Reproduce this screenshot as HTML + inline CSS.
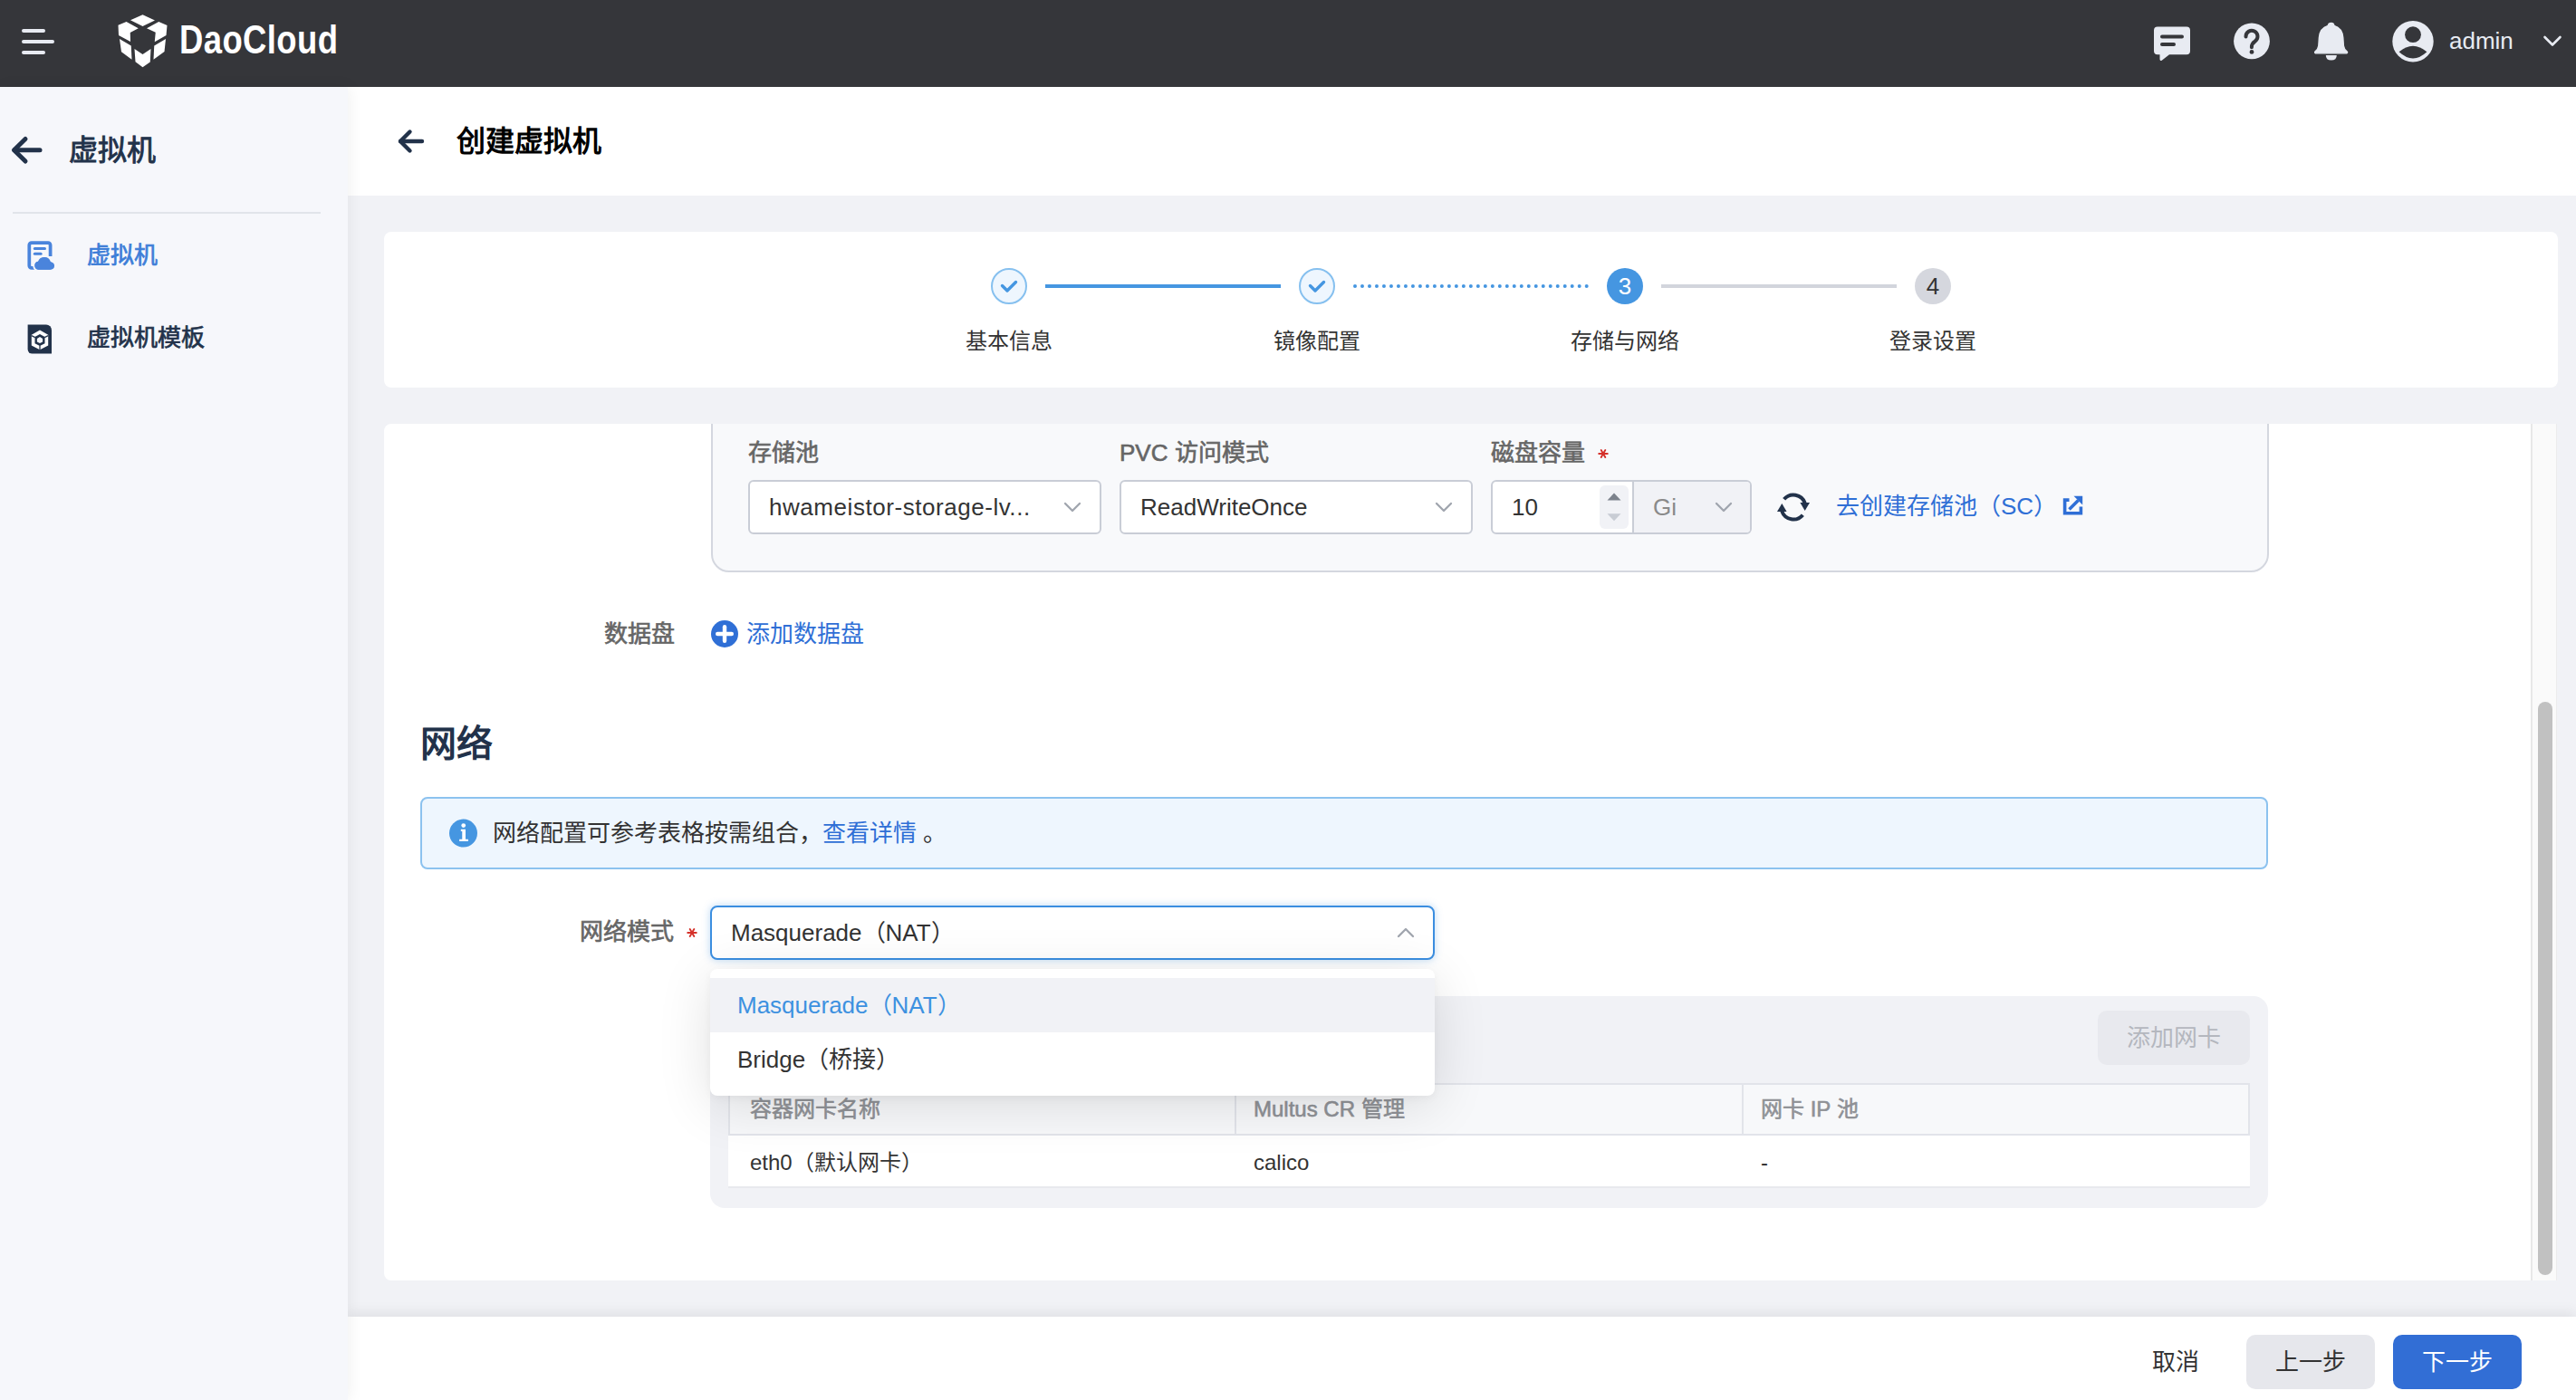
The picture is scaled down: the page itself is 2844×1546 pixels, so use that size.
<!DOCTYPE html>
<html lang="zh-CN">
<head>
<meta charset="utf-8">
<style>
*{box-sizing:border-box;margin:0;padding:0}
html,body{width:2844px;height:1546px;overflow:hidden}
body{position:relative;background:#f1f2f6;font-family:"Liberation Sans",sans-serif;color:#333;}
.a{position:absolute;white-space:nowrap}
#hdr{position:absolute;left:0;top:0;width:2844px;height:96px;background:#35363a}
#side{position:absolute;left:0;top:96px;width:384px;height:1450px;background:#f6f7fb;box-shadow:2px 0 16px rgba(0,0,0,0.06);z-index:5}
#chead{position:absolute;left:384px;top:96px;width:2460px;height:120px;background:#fff}
#steps{position:absolute;left:424px;top:256px;width:2400px;height:172px;background:#fff;border-radius:8px}
#form{position:absolute;left:424px;top:468px;width:2400px;height:946px;background:#fff;border-radius:8px 0 0 8px;overflow:hidden}
#foot{position:absolute;left:384px;top:1454px;width:2460px;height:92px;background:#fff;box-shadow:0 -4px 14px rgba(0,0,0,0.08);z-index:4}
.stl{font-size:24px;line-height:36px;text-align:center;color:#333}
.lbl{font-size:26px;font-weight:400;-webkit-text-stroke:0.65px #666;color:#666;line-height:40px}
.req{font-size:26px;color:#d93a3a;line-height:30px}
.inp{height:60px;border:2px solid #c9cdd6;border-radius:6px;background:#fff}
.itx{position:absolute;left:21px;top:0;line-height:56px;font-size:26px;color:#333;white-space:nowrap}
.lnk{font-size:26px;color:#2f6fd6}
.th{font-size:24px;font-weight:400;-webkit-text-stroke:0.6px #8f9196;color:#8f9196;line-height:40px}
.td{font-size:24px;color:#333;line-height:40px}
</style>
</head>
<body>
<!-- HEADER -->
<div id="hdr">
  <svg class="a" style="left:20px;top:28px" width="46" height="36" viewBox="0 0 46 36">
    <g stroke="#e8ebf2" stroke-width="4" stroke-linecap="round">
      <line x1="6" y1="6" x2="28" y2="6"/><line x1="6" y1="18" x2="38" y2="18"/><line x1="6" y1="30" x2="28" y2="30"/>
    </g>
  </svg>
  <svg class="a" style="left:125px;top:10px" width="70" height="70" viewBox="0 0 1400 1400">
    <g fill="#fff">
      <polygon points="650,125 920,250 650,380 380,245"/>
      <polygon points="110,355 290,280 555,425 375,520 380,720 120,580"/>
      <polygon points="1005,280 1190,360 1170,580 915,725 935,515 740,425"/>
      <polygon points="140,660 395,810 410,1115 180,945"/>
      <polygon points="1160,660 1130,940 890,1115 905,810"/>
      <polygon points="470,880 650,1000 830,880 815,1170 650,1285 490,1165"/>
    </g>
  </svg>
  <div class="a" style="left:198px;top:18px;font-size:45px;font-weight:bold;color:#fff;transform:scaleX(0.81);transform-origin:0 0;letter-spacing:0.5px">DaoCloud</div>
  <svg class="a" style="left:2370px;top:22px" width="56" height="50" viewBox="0 0 56 50">
    <path d="M12,7.6 H44 a4,4 0 0 1 4,4 V34.2 a4,4 0 0 1 -4,4 H25 L17,44.5 Q15,46 14.5,43.5 V38.2 H12 a4,4 0 0 1 -4,-4 V11.6 a4,4 0 0 1 4,-4 Z" fill="#e8ebf2"/>
    <g stroke="#35363a" stroke-width="4" stroke-linecap="round"><line x1="17" y1="18.4" x2="39" y2="18.4"/><line x1="17" y1="27" x2="30" y2="27"/></g>
  </svg>
  <svg class="a" style="left:2460px;top:20px" width="52" height="52" viewBox="0 0 52 52">
    <circle cx="26" cy="25.4" r="19.9" fill="#e8ebf2"/>
    <path d="M19.5,20.5 a6.5,6.5 0 1 1 10,5.2 q-3.6,2.3 -3.6,6.5" fill="none" stroke="#35363a" stroke-width="4" stroke-linecap="round"/>
    <circle cx="26" cy="37.4" r="2.4" fill="#35363a"/>
  </svg>
  <svg class="a" style="left:2550px;top:20px" width="48" height="52" viewBox="0 0 48 52">
    <path transform="translate(0,0.3) scale(1,0.945)" d="M23.8,5.5 q2.6,0 3.2,3 q9,2.8 9.8,14 l0.6,9.5 q0.5,4 3.6,6.5 q1.2,1.3 0,2.3 H6.2 q-1.2,-1 0,-2.3 q3.1,-2.5 3.6,-6.5 l0.6,-9.5 q0.8,-11.2 9.8,-14 q0.6,-3 3.6,-3 Z" fill="#e8ebf2" stroke="#e8ebf2" stroke-width="1.4" stroke-linejoin="round"/>
    <path d="M17.8,41 h12 q0,5.5 -6,5.5 q-6,0 -6,-5.5 Z" fill="#e8ebf2"/>
  </svg>
  <svg class="a" style="left:2636px;top:18px" width="56" height="56" viewBox="0 0 56 56">
    <circle cx="28" cy="27.8" r="22.7" fill="#e8ebf2"/>
    <circle cx="28" cy="20.2" r="8.9" fill="#35363a"/>
    <path d="M12.6,39.2 Q28,26.2 43.4,39.2 Q28,53.6 12.6,39.2 Z" fill="#35363a"/>
  </svg>
  <div class="a" style="left:2704px;top:30px;font-size:26px;color:#e8ebf2;line-height:30px">admin</div>
  <svg class="a" style="left:2806px;top:36px" width="24" height="18" viewBox="0 0 24 18">
    <polyline points="3.5,5 12,13.5 20.5,5" fill="none" stroke="#e8ebf2" stroke-width="2.6" stroke-linecap="round" stroke-linejoin="round"/>
  </svg>
</div>


<!-- SIDEBAR -->
<div id="side">
  <svg class="a" style="left:8px;top:50px" width="44" height="40" viewBox="0 0 44 40">
    <g fill="none" stroke="#22324a" stroke-width="5" stroke-linecap="round" stroke-linejoin="round">
      <line x1="8" y1="19.8" x2="36" y2="19.8"/><polyline points="20,7.5 7.5,19.8 20,32"/>
    </g>
  </svg>
  <div class="a" id="sbt" style="left:76px;top:50px;font-size:32px;font-weight:400;-webkit-text-stroke:0.9px #22324a;color:#22324a;line-height:40px">虚拟机</div>
  <div class="a" style="left:14px;top:138px;width:340px;height:2px;background:#e1e4ea"></div>
  <svg class="a" style="left:28px;top:168px" width="36" height="36" viewBox="0 0 36 36">
    <path d="M27.6,19 V6.7 a2.5,2.5 0 0 0 -2.5,-2.5 H6.8 a2.5,2.5 0 0 0 -2.5,2.5 V29.3 a2.5,2.5 0 0 0 2.5,2.5 H11" fill="none" stroke="#4a84dc" stroke-width="3.75"/>
    <g stroke="#4a84dc" stroke-width="3" stroke-linecap="round"><line x1="10.3" y1="10.6" x2="21.5" y2="10.6"/><line x1="10.3" y1="16.2" x2="17.1" y2="16.2"/></g>
    <g fill="#4a84dc" stroke="#f6f7fb" stroke-width="2.2">
      <path d="M14.5,34.8 a5.6,5.6 0 0 1 -0.6,-11.1 a8,8 0 0 1 14.9,0.6 a5.3,5.3 0 0 1 -0.6,10.5 Z"/>
    </g>
    <path d="M14.5,33.7 a4.5,4.5 0 0 1 -0.5,-8.9 a6.9,6.9 0 0 1 13.1,0.5 a4.2,4.2 0 0 1 -0.3,8.4 Z" fill="#4a84dc"/>
  </svg>
  <div class="a" id="m1" style="left:96px;top:169px;font-size:26px;font-weight:400;-webkit-text-stroke:0.7px #3d7ed8;color:#3d7ed8;line-height:34px">虚拟机</div>
  <svg class="a" style="left:28px;top:260px" width="34" height="36" viewBox="0 0 34 36">
    <path d="M2.6,2.4 H23 a6,6 0 0 1 6,6 V34.6 H7.6 a5,5 0 0 1 -5,-5 Z" fill="#22324a"/>
    <polygon points="16,8.6 25.2,13.8 25.2,25.4 16,30.2 6.8,25.4 6.8,13.8" fill="#fff"/>
    <polygon points="16,12.9 21.5,15.9 21.5,23.2 16,25.9 10.5,23.2 10.5,15.9" fill="#22324a"/>
    <polygon points="16,16.1 19.1,17.9 19.1,21.4 16,23.1 12.9,21.4 12.9,17.9" fill="#f6f7fb"/>
    <g stroke="#22324a" stroke-width="1.3"><line x1="6.8" y1="14.6" x2="10.8" y2="16.6"/><line x1="25.2" y1="14.6" x2="21.2" y2="16.6"/><line x1="16" y1="25.5" x2="16" y2="30.5"/></g>
  </svg>
  <div class="a" id="m2" style="left:96px;top:260px;font-size:26px;font-weight:400;-webkit-text-stroke:0.7px #22324a;color:#22324a;line-height:34px">虚拟机模板</div>
</div>

<!-- CONTENT HEADER -->
<div id="chead">
  <svg class="a" style="left:52px;top:44px" width="34" height="32" viewBox="0 0 34 32">
    <g fill="none" stroke="#22324a" stroke-width="4.4" stroke-linecap="round" stroke-linejoin="round">
      <line x1="6" y1="16" x2="30" y2="16"/><polyline points="16.5,5.5 6,16 16.5,26.5"/>
    </g>
  </svg>
  <div class="a" id="ctitle" style="left:120px;top:40px;font-size:32px;font-weight:700;color:#000;line-height:40px">创建虚拟机</div>
</div>

<!-- STEPS -->
<div id="steps">
  <div class="a" style="left:670px;top:40px;width:40px;height:40px;border-radius:50%;border:2px solid #86c0ef;background:#eef6fe"></div>
  <svg class="a" style="left:680px;top:52px" width="20" height="16" viewBox="0 0 20 16"><polyline points="2.5,7.5 8,13 17.5,3.5" fill="none" stroke="#4596e1" stroke-width="3.4" stroke-linecap="round" stroke-linejoin="round"/></svg>
  <div class="a" style="left:730px;top:58px;width:260px;height:4px;background:#4596e1"></div>
  <div class="a" style="left:1010px;top:40px;width:40px;height:40px;border-radius:50%;border:2px solid #86c0ef;background:#eef6fe"></div>
  <svg class="a" style="left:1020px;top:52px" width="20" height="16" viewBox="0 0 20 16"><polyline points="2.5,7.5 8,13 17.5,3.5" fill="none" stroke="#4596e1" stroke-width="3.4" stroke-linecap="round" stroke-linejoin="round"/></svg>
  <div class="a" style="left:1070px;top:58px;width:260px;height:4px;border-top:4px dotted #4596e1"></div>
  <div class="a" style="left:1350px;top:40px;width:40px;height:40px;border-radius:50%;background:#4596e1;color:#fff;font-size:26px;line-height:40px;text-align:center">3</div>
  <div class="a" style="left:1410px;top:58px;width:260px;height:4px;background:#d2d5dc"></div>
  <div class="a" style="left:1690px;top:40px;width:40px;height:40px;border-radius:50%;background:#d5d7de;color:#333;font-size:26px;line-height:40px;text-align:center">4</div>
  <div class="a stl" style="left:590px;top:103px;width:200px;">基本信息</div>
  <div class="a stl" style="left:930px;top:103px;width:200px;">镜像配置</div>
  <div class="a stl" style="left:1270px;top:103px;width:200px;">存储与网络</div>
  <div class="a stl" style="left:1610px;top:103px;width:200px;">登录设置</div>
</div>

<!-- FORM -->
<div id="form">
  <!-- storage box -->
  <div class="a" style="left:361px;top:-100px;width:1720px;height:264px;border:2px solid #d4d7df;border-radius:20px;background:#f8f9fb"></div>
  <div class="a lbl" style="left:402px;top:12px">存储池</div>
  <div class="a lbl" style="left:812px;top:12px">PVC 访问模式</div>
  <div class="a lbl" style="left:1222px;top:12px">磁盘容量</div>
  <svg class="a" style="left:1340px;top:27px" width="12" height="12" viewBox="0 0 12 12"><g stroke="#d5322b" stroke-width="1.9" stroke-linecap="round"><line x1="1.2" y1="6" x2="10.8" y2="6"/><line x1="3.7" y1="2.1" x2="8.3" y2="9.9"/><line x1="8.3" y1="2.1" x2="3.7" y2="9.9"/></g></svg>
  <div class="a inp" style="left:402px;top:62px;width:390px"><span class="itx" style="letter-spacing:0.55px">hwameistor-storage-lv...</span>
    <svg class="a" style="right:20px;top:21px" width="20" height="14" viewBox="0 0 20 14"><polyline points="2,3 10,11 18,3" fill="none" stroke="#a0a5ae" stroke-width="2.3" stroke-linecap="round" stroke-linejoin="round"/></svg></div>
  <div class="a inp" style="left:812px;top:62px;width:390px"><span class="itx">ReadWriteOnce</span>
    <svg class="a" style="right:20px;top:21px" width="20" height="14" viewBox="0 0 20 14"><polyline points="2,3 10,11 18,3" fill="none" stroke="#a0a5ae" stroke-width="2.3" stroke-linecap="round" stroke-linejoin="round"/></svg></div>
  <div class="a inp" style="left:1222px;top:62px;width:288px;overflow:hidden">
    <span class="itx">10</span>
    <div class="a" style="left:118px;top:4px;width:32px;height:48px;background:#f1f2f6;border-radius:6px"></div>
    <svg class="a" style="left:125px;top:11px" width="18" height="34" viewBox="0 0 18 34"><polygon points="1.5,9.5 16.5,9.5 9,1.5" fill="#7c828c"/><polygon points="1.5,24.3 16.5,24.3 9,32.3" fill="#c8ccd4"/></svg>
    <div class="a" style="left:154px;top:0;width:132px;height:56px;background:#f1f2f6;border-left:2px solid #c9cdd6"></div>
    <span class="a" style="left:177px;top:0;line-height:56px;font-size:26px;color:#8a8a8a">Gi</span>
    <svg class="a" style="left:244px;top:21px" width="24" height="14" viewBox="0 0 24 14"><polyline points="3,3 11,11 19,3" fill="none" stroke="#a0a5ae" stroke-width="2.3" stroke-linecap="round" stroke-linejoin="round"/></svg>
  </div>
  <svg class="a" style="left:1536px;top:75px" width="40" height="34" viewBox="0 0 40 34">
    <g fill="none" stroke="#22324a" stroke-width="4">
      <path d="M9.66,8.32 A13.5,13.5 0 0 1 32.69,12.38"/>
      <path d="M30.34,25.68 A13.5,13.5 0 0 1 7.31,21.62"/>
    </g>
    <polygon points="27.4,12 38,12 32.7,21" fill="#22324a"/>
    <polygon points="2,22 12.6,22 7.3,13" fill="#22324a"/>
  </svg>
  <span class="a lnk" style="left:1603px;top:71px;line-height:40px">去创建存储池（SC）</span>
  <svg class="a" style="left:1852px;top:78px" width="26" height="26" viewBox="0 0 26 26">
    <path d="M8.5,6.1 H3.6 V20.8 H21.4 V13.6" fill="none" stroke="#2f6fd6" stroke-width="3.6"/>
    <path d="M8.5,16.5 L18.5,6.5" stroke="#2f6fd6" stroke-width="3.6"/>
    <polygon points="13.5,1.7 23.2,1.7 23.2,11.4" fill="#2f6fd6"/>
  </svg>

  <!-- data disk -->
  <div class="a lbl" style="left:243px;top:212px">数据盘</div>
  <svg class="a" style="left:361px;top:217px" width="30" height="30" viewBox="0 0 30 30"><circle cx="15" cy="15" r="15" fill="#2f6fd6"/><g stroke="#fff" stroke-width="4.4" stroke-linecap="round"><line x1="15" y1="7.2" x2="15" y2="22.8"/><line x1="7.2" y1="15" x2="22.8" y2="15"/></g></svg>
  <span class="a lnk" style="left:400px;top:212px;line-height:40px">添加数据盘</span>

  <!-- network -->
  <div class="a" id="nettl" style="left:40px;top:328px;font-size:40px;font-weight:700;color:#22324a;line-height:50px">网络</div>
  <div class="a" style="left:40px;top:412px;width:2040px;height:80px;border:2px solid #8cc2ef;border-radius:8px;background:#eef6fe"></div>
  <svg class="a" style="left:72px;top:437px" width="31" height="31" viewBox="0 0 30 30" overflow="visible"><circle cx="15" cy="14.6" r="15" fill="#4596e1"/><circle cx="15.2" cy="6.3" r="2.3" fill="#fff"/><path d="M12.4,10.5 H17.4 V21.1 H20.2 V23.3 H10.8 V21.1 H13.8 V12.5 H12.4 Z" fill="#fff"/></svg>
  <span class="a" style="left:120px;top:432px;font-size:26px;line-height:40px;color:#333">网络配置可参考表格按需组合，<span style="color:#2f6fd6">查看详情</span> 。</span>

  <div class="a lbl" style="left:216px;top:541px">网络模式</div>
  <svg class="a" style="left:334px;top:556px" width="12" height="12" viewBox="0 0 12 12"><g stroke="#d5322b" stroke-width="1.9" stroke-linecap="round"><line x1="1.2" y1="6" x2="10.8" y2="6"/><line x1="3.7" y1="2.1" x2="8.3" y2="9.9"/><line x1="8.3" y1="2.1" x2="3.7" y2="9.9"/></g></svg>
  <div class="a" style="left:360px;top:532px;width:800px;height:60px;border:2px solid #3b8ee0;border-radius:8px;background:#fff;box-shadow:0 0 8px rgba(59,142,224,0.35)"><span class="itx" style="left:21px">Masquerade（NAT）</span>
    <svg class="a" style="right:17px;top:21px" width="24" height="14" viewBox="0 0 24 14"><polyline points="3,11 11,3 19,11" fill="none" stroke="#a0a5ae" stroke-width="2.3" stroke-linecap="round" stroke-linejoin="round"/></svg></div>

  <!-- nic container -->
  <div class="a" style="left:360px;top:632px;width:1720px;height:234px;background:#f1f2f6;border-radius:16px"></div>
  <div class="a" style="left:1892px;top:648px;width:168px;height:60px;background:#e8e9ee;border-radius:10px;color:#b4b7be;font-size:26px;line-height:60px;text-align:center">添加网卡</div>
  <div class="a" style="left:380px;top:728px;width:1680px;height:58px;background:#f7f8fa;border:2px solid #e2e4ea"></div>
  <div class="a" style="left:939px;top:730px;width:2px;height:54px;background:#e2e4ea"></div>
  <div class="a" style="left:1499px;top:730px;width:2px;height:54px;background:#e2e4ea"></div>
  <div class="a" style="left:380px;top:786px;width:1680px;height:58px;background:#fff;border-bottom:2px solid #e8e9ee"></div>
  <span class="a th" style="left:404px;top:737px">容器网卡名称</span>
  <span class="a th" style="left:960px;top:737px">Multus CR 管理</span>
  <span class="a th" style="left:1520px;top:737px">网卡 IP 池</span>
  <span class="a td" style="left:404px;top:796px">eth0（默认网卡）</span>
  <span class="a td" style="left:960px;top:796px">calico</span>
  <span class="a td" style="left:1520px;top:796px">-</span>

  <!-- dropdown -->
  <div class="a" style="left:360px;top:602px;width:800px;height:140px;background:#fff;border-radius:8px;box-shadow:0 10px 60px rgba(0,0,0,0.12), 0 3px 10px rgba(0,0,0,0.04);z-index:3">
    <div class="a" style="left:0;top:10px;width:800px;height:60px;background:#f1f2f6"></div>
    <span class="a" style="left:30px;top:10px;line-height:60px;font-size:26px;color:#3d91e0">Masquerade（NAT）</span>
    <span class="a" style="left:30px;top:70px;line-height:60px;font-size:26px;color:#333">Bridge（桥接）</span>
  </div>

  <!-- scrollbar -->
  <div class="a" style="left:2370px;top:0;width:29px;height:946px;background:#fafafa;border-left:2px solid #e8e8e8;border-right:1px solid #ececec"></div><div class="a" style="left:2399px;top:0;width:1px;height:946px;background:#f1f2f6"></div>
  <div class="a" style="left:2378px;top:307px;width:16px;height:633px;background:#c1c1c1;border-radius:8px"></div>
</div>

<!-- FOOTER -->
<div id="foot">
  <span class="a" style="left:1992px;top:30px;font-size:26px;line-height:40px;color:#333">取消</span>
  <div class="a" style="left:2096px;top:20px;width:142px;height:60px;border-radius:10px;background:#e6e7ec;color:#333;font-size:26px;line-height:60px;text-align:center">上一步</div>
  <div class="a" style="left:2258px;top:20px;width:142px;height:60px;border-radius:10px;background:#326ed5;color:#fff;font-size:26px;line-height:60px;text-align:center">下一步</div>
</div>
</body>
</html>
